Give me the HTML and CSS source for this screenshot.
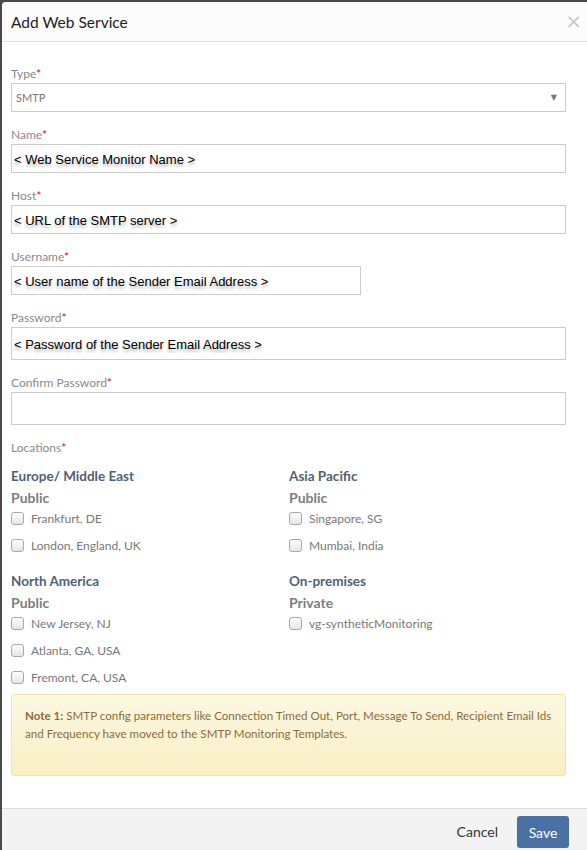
FILE: index.html
```html
<!DOCTYPE html>
<html>
<head>
<meta charset="utf-8">
<link rel="stylesheet" href="styles.css">
</head>
<body>
<div class="modal">
  <div class="modal-header">
    <span class="title">Add Web Service</span>
    <span class="close">&times;</span>
  </div>
  <div class="modal-body">
    <div class="group">
      <div class="label">Type<span class="req">*</span></div>
      <div class="select"><span>SMTP</span><span class="caret">&#9660;</span></div>
    </div>
    <div class="group">
      <div class="label">Name<span class="req">*</span></div>
      <div class="input">&lt; Web Service Monitor Name &gt;</div>
    </div>
    <div class="group">
      <div class="label">Host<span class="req">*</span></div>
      <div class="input">&lt; URL of the SMTP server &gt;</div>
    </div>
    <div class="group">
      <div class="label">Username<span class="req">*</span></div>
      <div class="input short">&lt; User name of the Sender Email Address &gt;</div>
    </div>
    <div class="group">
      <div class="label">Password<span class="req">*</span></div>
      <div class="input tall">&lt; Password of the Sender Email Address &gt;</div>
    </div>
    <div class="group">
      <div class="label">Confirm Password<span class="req">*</span></div>
      <div class="input tall"></div>
    </div>
    <div class="label">Locations<span class="req">*</span></div>
    <div class="locations">
      <div class="region">
        <div class="region-title">Europe/ Middle East</div>
        <div class="sub">Public</div>
        <label class="check"><span class="box"></span>Frankfurt, DE</label>
        <label class="check"><span class="box"></span>London, England, UK</label>
      </div>
      <div class="region">
        <div class="region-title">Asia Pacific</div>
        <div class="sub">Public</div>
        <label class="check"><span class="box"></span>Singapore, SG</label>
        <label class="check"><span class="box"></span>Mumbai, India</label>
      </div>
      <div class="region">
        <div class="region-title">North America</div>
        <div class="sub">Public</div>
        <label class="check"><span class="box"></span>New Jersey, NJ</label>
        <label class="check"><span class="box"></span>Atlanta, GA, USA</label>
        <label class="check"><span class="box"></span>Fremont, CA, USA</label>
      </div>
      <div class="region">
        <div class="region-title">On-premises</div>
        <div class="sub">Private</div>
        <label class="check"><span class="box"></span>vg-syntheticMonitoring</label>
      </div>
    </div>
    <div class="note"><b>Note 1:</b> SMTP config parameters like Connection Timed Out, Port, Message To Send, Recipient Email Ids and Frequency have moved to the SMTP Monitoring Templates.</div>
  </div>
  <div class="modal-footer">
    <span class="cancel">Cancel</span>
    <span class="save">Save</span>
  </div>
</div>
</body>
</html>
```
FILE: styles.css
```css
html, body {
  margin: 0;
  padding: 0;
}
body {
  background: #4a4a4a;
  padding: 2px 0 0 2px;
  height: 850px;
  box-sizing: border-box;
  overflow: hidden;
  font-family: Lato, "Open Sans", sans-serif;
}
.modal {
  background: #fff;
  border-radius: 4px 0 0 0;
  width: 585px;
  height: 848px;
  display: flex;
  flex-direction: column;
  overflow: hidden;
}
.modal-header {
  height: 39px;
  background: #fcfcfc;
  border-bottom: 1px solid #e2e2e2;
  display: flex;
  align-items: center;
  justify-content: space-between;
  padding: 0 5px 0 9px;
}
.title {
  font-size: 15.5px;
  color: #222;
  margin-top: 1px;
}
.close {
  font-size: 20px;
  color: #c8c8c8;
  font-family: "DejaVu Sans", sans-serif;
  margin-top: -1px;
}
.modal-body {
  padding: 23px 0 0 9px;
  width: 555px;
  flex: 1;
}
.group {
  margin-bottom: 14px;
}
.label {
  font-size: 12px;
  line-height: 16px;
  padding-top: 1px;
  color: #8a8a8a;
  margin-bottom: 1px;
}
.req {
  color: #d0121a;
}
.select, .input {
  box-sizing: border-box;
  border: 1px solid #ccc;
  height: 29px;
  display: flex;
  align-items: center;
}
.select {
  justify-content: space-between;
  padding: 0 8px 0 4px;
  font-size: 11px;
  color: #777;
}
.caret {
  font-size: 8px;
  color: #777;
  font-family: "DejaVu Sans", sans-serif;
}
.input {
  padding: 2px 0 0 2px;
  font-family: "Liberation Sans", Arial, sans-serif;
  font-size: 13px;
  color: #000;
  text-shadow: 0 3px 3px rgba(0, 0, 0, 0.3);
}
.input.short {
  width: 350px;
}
.input.tall {
  height: 33px;
}
.locations {
  display: grid;
  grid-template-columns: 278px 277px;
  row-gap: 9px;
  margin-top: 10px;
}
.region-title {
  font-size: 13.5px;
  line-height: 20px;
  font-weight: bold;
  color: #4e6277;
}
.sub {
  font-size: 14px;
  line-height: 20px;
  font-weight: bold;
  color: #7d7d7d;
  margin-top: 2px;
}
.check {
  display: flex;
  align-items: center;
  height: 20px;
  margin-bottom: 7px;
  font-size: 12px;
  color: #777;
}
.box {
  width: 11px;
  height: 11px;
  border: 1px solid #a8a8a8;
  border-radius: 3px;
  background: linear-gradient(#fdfdfd, #e6e6e6);
  margin-right: 7px;
}
.note {
  box-sizing: border-box;
  height: 82px;
  border: 1px solid #f4e3a0;
  border-radius: 3px;
  background: linear-gradient(#fcf7e2, #f8efc4);
  padding: 12px 8px 0 13px;
  font-size: 11.6px;
  line-height: 18px;
  color: #8a6d3b;
}
.note b {
  font-weight: bold;
}
.modal-footer {
  height: 42px;
  background: #f3f3f3;
  border-top: 1px solid #dcdcdc;
  display: flex;
  align-items: flex-start;
  justify-content: flex-end;
  padding: 7px 18px 0 0;
  box-sizing: border-box;
}
.cancel {
  font-size: 14px;
  line-height: 32px;
  color: #333;
  margin-right: 19px;
}
.save {
  background: #4a71a3;
  color: #fff;
  font-size: 14px;
  width: 52px;
  height: 32px;
  border-radius: 3px;
  display: flex;
  align-items: center;
  justify-content: center;
}
```
